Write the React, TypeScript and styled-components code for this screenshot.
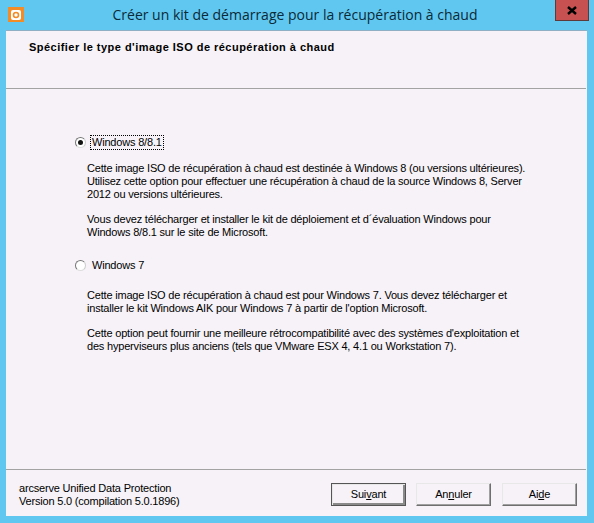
import styled, { createGlobalStyle } from "styled-components"

const Global = createGlobalStyle`
html, body { margin: 0; padding: 0; background: #60c8f0; }
body { width: 594px; height: 523px; overflow: hidden; font-family: "Liberation Sans", Arial, sans-serif; }
`
const Win = styled.div`
  width: 594px;
  height: 523px;
  background: #60c8f0;
  display: flex;
  flex-direction: column;
  padding: 0 7px 7px 6px;
  box-sizing: border-box;
`
const TitleBar = styled.div`
  height: 30px;
  flex: none;
  display: flex;
  align-items: flex-start;
  margin-right: -7px;
`
const AppIcon = styled.div`
  width: 16px;
  height: 15px;
  margin: 7px 0 0 2px;
  flex: none;
  background: #f28c28;
  display: flex;
  align-items: center;
  justify-content: center;
`
const Title = styled.div`
  flex: 1;
  text-align: center;
  font-family: "Open Sans", sans-serif;
  font-size: 14px;
  line-height: 20px;
  padding-top: 5px;
  padding-left: 11px;
  color: #0c2a38;
`
const Close = styled.div`
  width: 34px;
  height: 21px;
  margin-right: 5px;
  flex: none;
  box-sizing: border-box;
  background: #c75050;
  border: 1px solid #5e3a3a;
  border-top: none;
  display: flex;
  align-items: center;
  justify-content: center;
`
const Panel = styled.div`
  flex: 1;
  background: #f6f2f7;
  border-top: 1px solid #8fb0c4;
  display: flex;
  flex-direction: column;
  color: #000;
  font-size: 11px;
  line-height: 13px;
  letter-spacing: -0.19px;
`
const Header = styled.div`
  height: 58px;
  box-sizing: border-box;
  padding: 10px 0 0 23px;
  font-weight: 700;
  letter-spacing: 0.47px;
  border-bottom: 1px solid #a3a3a3;
  margin-right: 1px;
  flex: none;
`
const Body = styled.div`
  flex: 1;
  padding: 46px 40px 0 69px;
  display: flex;
  flex-direction: column;
`
const Option = styled.div<{ $top?: number }>`
  display: flex;
  align-items: center;
  gap: 4px;
  height: 15px;
  margin-top: ${p => p.$top ?? 0}px;
`
const Radio = styled.span<{ $on?: boolean }>`
  width: 11px;
  height: 11px;
  box-sizing: border-box;
  border-radius: 50%;
  border: 1px solid;
  border-color: #777 #ccc #ddd #777;
  background: #fff;
  display: flex;
  align-items: center;
  justify-content: center;
  margin-right: 1px;
  &::after {
    content: "";
    width: 5px;
    height: 5px;
    border-radius: 50%;
    background: ${p => (p.$on ? "#111" : "transparent")};
  }
`
const OptionLabel = styled.span<{ $focus?: boolean }>`
  padding: 0 1px;
  outline: ${p => (p.$focus ? "1px dotted #000" : "none")};
`
const Desc = styled.div<{ $top: number }>`
  margin: ${p => p.$top}px 0 0 12px;
  white-space: nowrap;
`
const Para = styled.p<{ $gap?: boolean }>`
  margin: ${p => (p.$gap ? "12px" : "0")} 0 0 0;
`
const Footer = styled.div`
  height: 47px;
  box-sizing: border-box;
  flex: none;
  border-top: 1px solid #a3a3a3;
  margin-right: 1px;
  display: flex;
  align-items: flex-start;
  justify-content: space-between;
  padding: 12px 9px 0 13px;
`
const Version = styled.div``
const Buttons = styled.div`
  display: flex;
  gap: 11px;
  margin-top: 1px;
`
const Button = styled.div<{ $def?: boolean }>`
  width: 75px;
  height: 23px;
  box-sizing: border-box;
  display: flex;
  align-items: center;
  justify-content: center;
  background: #f6f2f7;
  border: 1px solid;
  border-color: ${p => (p.$def ? "#555" : "#e8e8e8 #6f6f6f #6f6f6f #e8e8e8")};
  margin-right: ${p => (p.$def ? "-1px" : "0")};
  box-shadow: ${p => (p.$def ? "inset 1px 1px 0 #e8e8e8, inset -2px -2px 0 #8a8a8a" : "inset -1px -1px 0 #a0a0a0")};
  u { text-underline-offset: 1px; }
`

export default function App() {
  return (
    <>
      <Global />
      <Win>
        <TitleBar>
          <AppIcon>
            <svg width="12" height="12" viewBox="0 0 12 12">
              <rect x="1" y="1" width="10" height="10" rx="2" fill="#fff" />
              <circle cx="6" cy="6" r="2.5" fill="none" stroke="#f28c28" strokeWidth="1.6" />
            </svg>
          </AppIcon>
          <Title>Créer un kit de démarrage pour la récupération à chaud</Title>
          <Close>
            <svg width="10" height="9" viewBox="0 0 10 9">
              <path d="M1 1 L9 8 M9 1 L1 8" stroke="#000" strokeWidth="2.4" fill="none" />
            </svg>
          </Close>
        </TitleBar>
        <Panel>
          <Header>Spécifier le type d'image ISO de récupération à chaud</Header>
          <Body>
            <Option>
              <Radio $on />
              <OptionLabel $focus>Windows 8/8.1</OptionLabel>
            </Option>
            <Desc $top={12}>
              <Para>
                Cette image ISO de récupération à chaud est destinée à Windows 8 (ou versions ultérieures).<br />
                Utilisez cette option pour effectuer une récupération à chaud de la source Windows 8, Server<br />
                2012 ou versions ultérieures.
              </Para>
              <Para $gap>
                Vous devez télécharger et installer le kit de déploiement et d´évaluation Windows pour<br />
                Windows 8/8.1 sur le site de Microsoft.
              </Para>
            </Desc>
            <Option $top={19}>
              <Radio />
              <OptionLabel>Windows 7</OptionLabel>
            </Option>
            <Desc $top={16}>
              <Para>
                Cette image ISO de récupération à chaud est pour Windows 7. Vous devez télécharger et<br />
                installer le kit Windows AIK pour Windows 7 à partir de l'option Microsoft.
              </Para>
              <Para $gap>
                Cette option peut fournir une meilleure rétrocompatibilité avec des systèmes d'exploitation et<br />
                des hyperviseurs plus anciens (tels que VMware ESX 4, 4.1 ou Workstation 7).
              </Para>
            </Desc>
          </Body>
          <Footer>
            <Version>
              arcserve Unified Data Protection<br />
              Version 5.0 (compilation 5.0.1896)
            </Version>
            <Buttons>
              <Button $def>Sui<u>v</u>ant</Button>
              <Button>An<u>n</u>uler</Button>
              <Button>Ai<u>d</u>e</Button>
            </Buttons>
          </Footer>
        </Panel>
      </Win>
    </>
  )
}
